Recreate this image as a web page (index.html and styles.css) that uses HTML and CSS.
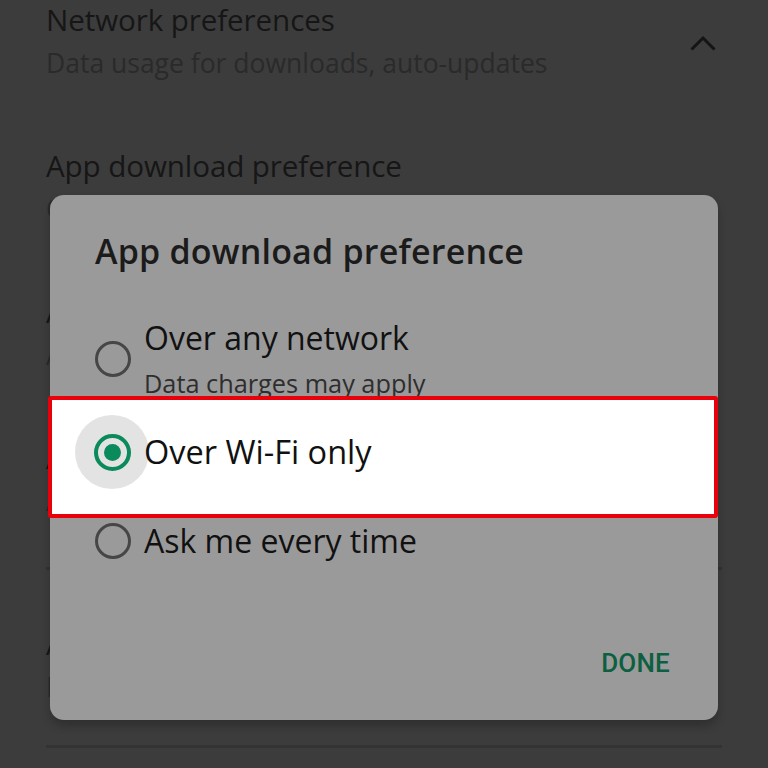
FILE: index.html
```html
<!DOCTYPE html>
<html>
<head>
<meta charset="utf-8">
<link rel="stylesheet" href="styles.css">
</head>
<body>
<div class="settings">
  <div class="item">
    <div class="texts">
      <div class="title">Network preferences</div>
      <div class="sub">Data usage for downloads, auto-updates</div>
    </div>
    <svg class="chev" width="28" height="18" viewBox="0 0 28 18"><path d="M2.5 15.5 L14 4 L25.5 15.5" fill="none" stroke="#141414" stroke-width="3"/></svg>
  </div>
  <div class="item">
    <div class="texts">
      <div class="title">App download preference</div>
      <div class="sub">Over Wi-Fi only</div>
    </div>
  </div>
  <div class="item">
    <div class="texts">
      <div class="title">Auto-update apps</div>
      <div class="sub">Auto-update apps over Wi-Fi only</div>
    </div>
  </div>
  <div class="item item-last">
    <div class="texts">
      <div class="title">Auto-play videos</div>
      <div class="sub">Auto-play videos over Wi-Fi only</div>
    </div>
  </div>
  <div class="divider"></div>
  <div class="item item-group">
    <div class="texts">
      <div class="title">Authentication</div>
      <div class="sub">Every purchase</div>
    </div>
  </div>
  <div class="divider"></div>
</div>

<div class="dialog">
  <h2 class="dtitle">App download preference</h2>
  <div class="option opt-any">
    <span class="radio"></span>
    <div class="otext">
      <div class="olabel">Over any network</div>
      <div class="osub">Data charges may apply</div>
    </div>
  </div>
  <div class="option selected">
    <span class="halo"><span class="radio on"><span class="dot"></span></span></span>
    <div class="otext">
      <div class="olabel">Over Wi-Fi only</div>
    </div>
  </div>
  <div class="option opt-ask">
    <span class="radio"></span>
    <div class="otext">
      <div class="olabel">Ask me every time</div>
    </div>
  </div>
  <div class="actions">
    <span class="done">DONE</span>
  </div>
</div>
</body>
</html>
```

FILE: styles.css
```css
html, body {
  margin: 0;
  padding: 0;
}
body {
  width: 768px;
  height: 768px;
  background: #3c3c3c;
  font-family: "Open Sans", "Noto Sans", sans-serif;
  overflow: hidden;
  position: relative;
}
.settings {
  padding: 0 46px;
}
.item {
  display: flex;
  align-items: flex-start;
  justify-content: space-between;
  height: 146px;
  padding-top: 2px;
  box-sizing: border-box;
}
.item-last {
  height: 129px;
}
.item-group {
  height: 175px;
  padding-top: 56px;
}
.chev {
  margin-top: 32px;
  margin-right: 5px;
}
.title {
  color: #161616;
  font-size: 29.6px;
  line-height: 36px;
  letter-spacing: -0.1px;
}
.sub {
  color: #2a2a2a;
  font-size: 26.5px;
  line-height: 36px;
  margin-top: 7px;
  letter-spacing: 0;
}
.divider {
  height: 3px;
  background: #333333;
}

.dialog {
  position: absolute;
  left: 50px;
  top: 195px;
  width: 668px;
  height: 525px;
  background: #9a9a9a;
  border-radius: 14px;
  box-shadow: 0 6px 10px rgba(0,0,0,0.22);
  display: flex;
  flex-direction: column;
}
.dtitle {
  margin: 34px 0 0 45px;
  font-size: 34px;
  font-weight: 600;
  color: #1b1b1b;
  line-height: 44px;
  letter-spacing: 0.2px;
}
.option {
  display: flex;
  align-items: center;
  padding-left: 45px;
  box-sizing: border-box;
}
.opt-any {
  margin-top: 46px;
}
.radio {
  width: 36px;
  height: 36px;
  border: 3px solid #464646;
  border-radius: 50%;
  box-sizing: border-box;
  flex: none;
  display: flex;
  align-items: center;
  justify-content: center;
}
.otext {
  margin-left: 13px;
}
.olabel {
  font-size: 32px;
  color: #111;
  line-height: 38px;
}
.osub {
  font-size: 25.3px;
  color: #2e2e2e;
  line-height: 30px;
  margin-top: 11px;
}
.selected {
  height: 122px;
  margin: -2px 0 0 -2px;
  background: #fff;
  border: 4px solid #e8000b;
  border-radius: 3px;
  padding: 0 0 10px 23px;
}
.halo {
  width: 74px;
  height: 74px;
  border-radius: 50%;
  background: #e3e3e3;
  display: flex;
  align-items: center;
  justify-content: center;
  flex: none;
}
.radio.on {
  width: 37px;
  height: 37px;
  border: 4px solid #0b8a5c;
}
.dot {
  width: 17px;
  height: 17px;
  border-radius: 50%;
  background: #0b8a5c;
}
.selected .otext {
  margin-left: -5px;
}
.selected .olabel {
  font-size: 32.5px;
}
.opt-ask {
  height: 46px;
}
.actions {
  margin-top: auto;
  display: flex;
  justify-content: flex-end;
  padding: 0 48px 42px 0;
}
.done {
  font-family: Roboto, "Noto Sans", sans-serif;
  color: #0c5f40;
  font-size: 26px;
  line-height: 30px;
  font-weight: 500;
  letter-spacing: 0.2px;
}
```
